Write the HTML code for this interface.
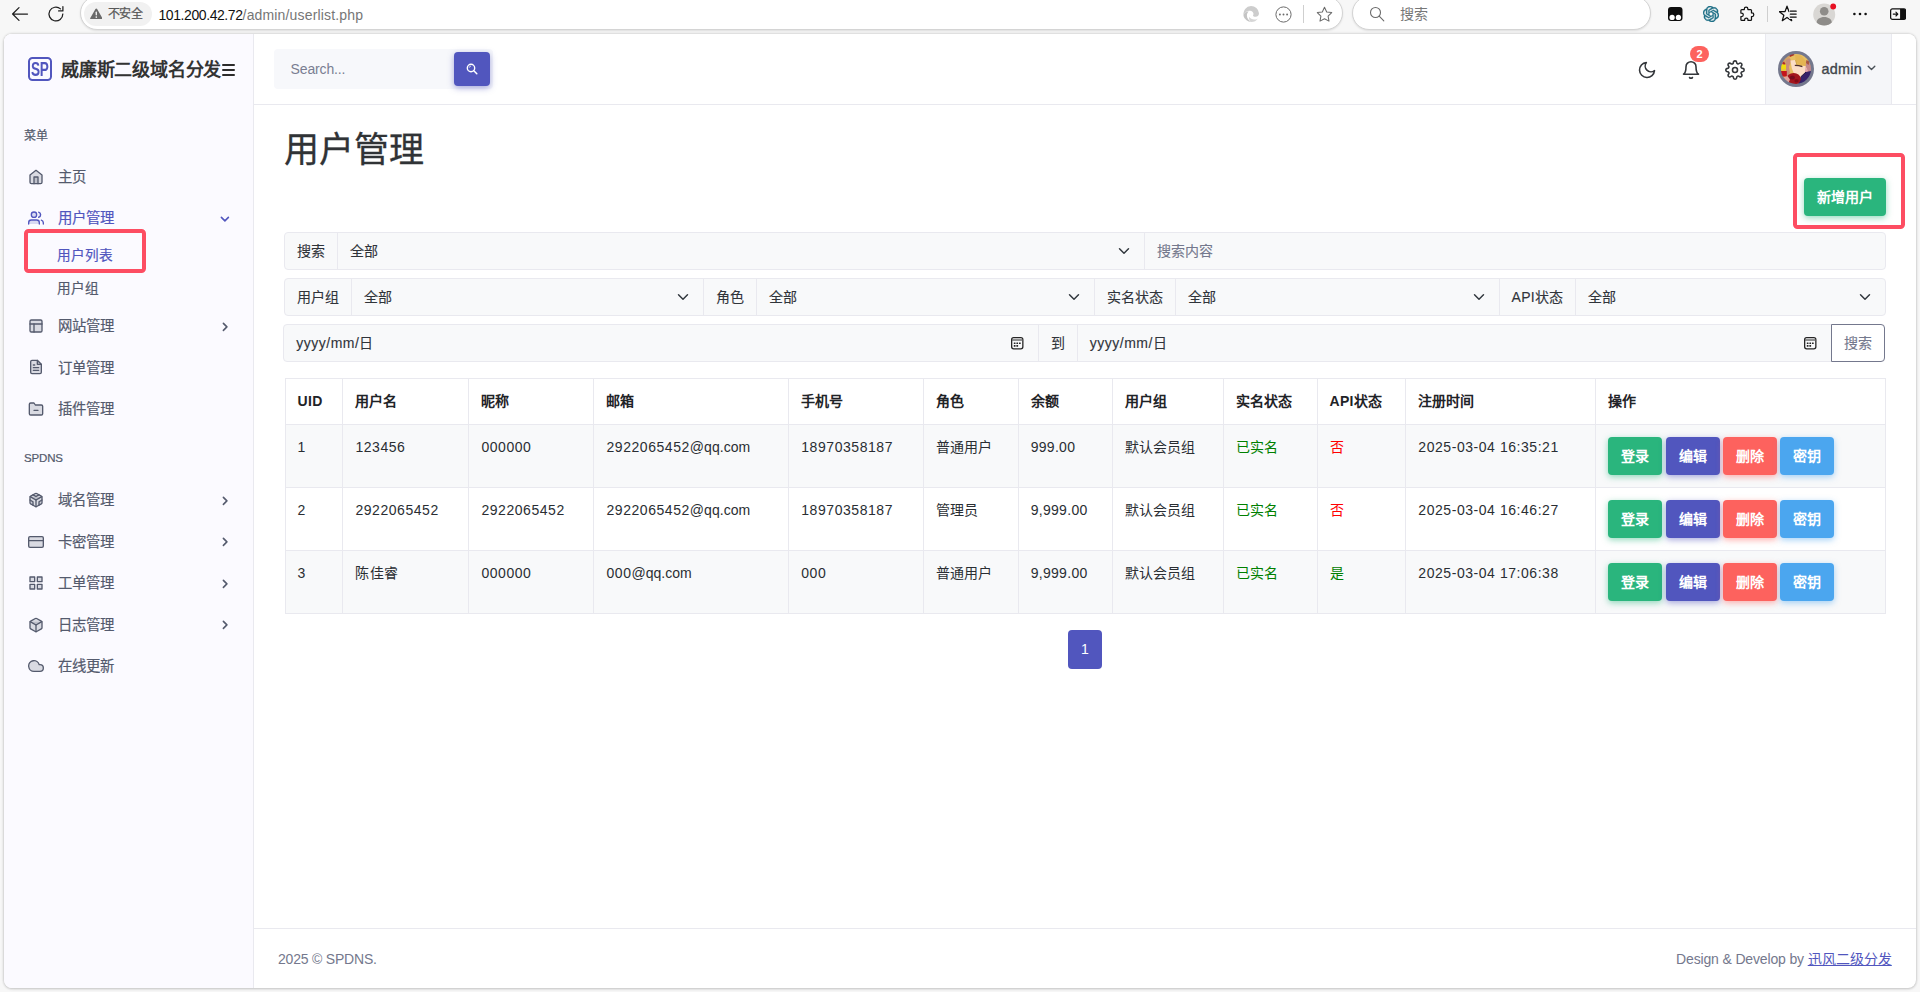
<!DOCTYPE html>
<html lang="zh-CN">
<head>
<meta charset="utf-8">
<title>用户管理</title>
<style>
*{box-sizing:border-box;margin:0;padding:0}
html,body{width:1920px;height:992px;overflow:hidden}
body{background:#f7f7f7;font-family:"Liberation Sans",sans-serif;font-size:14px;line-height:1.5;color:#495057;position:relative}
svg{display:block}
a{text-decoration:none;color:inherit}
/* ---------- browser chrome ---------- */
#chrome{position:absolute;left:0;top:0;width:1920px;height:34px;background:#f7f7f7}
#chrome .abs{position:absolute}
.pill{position:absolute;background:#fff;border:1px solid #d4d4d4;border-radius:17px;box-shadow:0 1px 2px rgba(0,0,0,.10)}
/* ---------- frame ---------- */
#frame{position:absolute;left:4px;top:33.600px;width:1912px;height:954.400px;background:#fff;border-radius:8px;overflow:hidden;box-shadow:0 0 3px rgba(0,0,0,.22),0 1px 3px rgba(0,0,0,.12)}
#topbar{position:absolute;left:0;top:0;width:1912px;height:71px;border-bottom:1px solid #e9e9ef;background:#fff}
#brand{position:absolute;left:0;top:0;width:250px;height:70px;background:#fbfaff;border-right:1px solid #e9e9ef}
#side{position:absolute;left:0;top:70px;width:250px;bottom:0;background:#fbfaff;border-right:1px solid #e9e9ef;padding-top:11.200px}
#main{position:absolute;left:250px;top:71px;right:0;bottom:60px}
#footer{position:absolute;left:250px;right:0;bottom:0;height:60px;border-top:1px solid #e9e9ef;color:#74788d;font-size:14px}

#brand .logo{position:absolute;left:24px;top:23.5px;width:24px;height:24px;border:2px solid #5156be;border-radius:4.500px;color:#5156be;font-weight:700;font-size:20px;line-height:20px;text-align:center;letter-spacing:-.5px}
#brand .logo span{display:inline-block;transform:scaleX(.68);transform-origin:50% 50%;margin:0 -10px}
#brand .txt{position:absolute;left:57px;top:23px;font-size:18px;font-weight:700;line-height:27px;color:#333;white-space:nowrap;letter-spacing:-.2px}
#brand .burger{position:absolute;left:217.500px;top:30px;width:13.500px;height:12px}
#brand .burger i{position:absolute;left:0;width:100%;height:2.200px;background:#2c2c2c;border-radius:1px}
#tsearch{position:absolute;left:269.600px;top:15.500px;width:219px;height:40px;border-radius:4px;background:#f7f8fb;color:#7a7e92;font-size:14px;line-height:40px;padding-left:17px;letter-spacing:-.15px}
#tsearch .b{position:absolute;right:3px;top:3px;width:36px;height:34px;border-radius:4px;background:#5156be;box-shadow:0 2px 6px 0 rgba(81,86,190,.5)}
.hicon{position:absolute}
#ublock{position:absolute;left:1760.700px;top:0;width:127.300px;height:70px;background:#f5f6f9;border-left:1px solid #e9e9ef;border-right:1px solid #e9e9ef}
#ublock .av{position:absolute;left:12.300px;top:17.400px;width:36px;height:36px;border-radius:50%;background:#74788d;padding:3px}
#ublock .nm{position:absolute;left:55.800px;top:24px;font-size:14.400px;line-height:22px;font-weight:400;color:#3f454b;letter-spacing:.25px;-webkit-text-stroke:.35px #3f454b}

#side .mt{height:42px;padding:12px 20px;font-size:12px;line-height:18px;color:#545a6d;font-weight:400;letter-spacing:.1px}
#side .it,#side .sub,#side .mt{-webkit-text-stroke:.2px currentColor}
#side .it{position:relative;height:41.440px;padding:9.920px 24px;font-size:14.400px;line-height:21.600px;color:#545a6d;white-space:nowrap}
#side .it svg.ic{position:absolute;left:24px;top:12px;width:16px;height:16px;fill:rgba(84,90,109,.2);stroke:#545a6d;stroke-width:2;stroke-linecap:round;stroke-linejoin:round}
#side .it span{position:absolute;left:54px;top:10.100px}
#side .it svg.ar{position:absolute;fill:none;stroke:#545a6d;stroke-width:1.600;stroke-linecap:round;stroke-linejoin:round}
#side .it.act{color:#5156be}
#side .it.act svg.ic{stroke:#5156be;fill:rgba(81,86,190,.2)}
#side .it.act svg.ar{stroke:#5156be}
#side .sub{height:33.200px;padding:6.400px 24px 6.400px 52.500px;font-size:13.600px;line-height:20.400px;color:#545a6d}
#side .sub.act{color:#5156be}
.redbox{position:absolute;border:4px solid #fd4d62;border-radius:4.500px}

/* main coords: x = target-254, y = target-104.6 */
#main h1{position:absolute;left:30px;top:24px;font-size:35px;line-height:42px;font-weight:400;color:#303336;white-space:nowrap;-webkit-text-stroke:.3px #303336}
.btn{position:absolute;height:38px;border-radius:4px;color:#fff;font-weight:700;font-size:14px;line-height:38px;text-align:center;white-space:nowrap}
.b-g{background:#2ab57d;box-shadow:0 2px 6px 0 rgba(42,181,125,.5)}
.b-p{background:#5156be;box-shadow:0 2px 6px 0 rgba(81,86,190,.5)}
.b-r{background:#fd625e;box-shadow:0 2px 6px 0 rgba(253,98,94,.5)}
.b-b{background:#4ba6ef;box-shadow:0 2px 6px 0 rgba(75,166,239,.5)}
.frow{position:absolute;height:38px;border:1px solid #e9e9ef;border-radius:4px;background:#f8f9fa;display:flex;font-size:14px;line-height:36px;color:#30343a;overflow:hidden;-webkit-text-stroke:.12px currentColor}
.frow>div{position:relative;border-right:1px solid #e9e9ef;padding:0 12px;white-space:nowrap;flex:none}
.frow>div:last-child{border-right:0}
.frow .sel svg{position:absolute;right:12px;top:12px}
.frow .ph{color:#74788d}
.frow .dt svg{position:absolute;right:14.300px;top:11.300px}
#tbl{position:absolute;left:30.500px;top:273.700px;border-collapse:collapse;table-layout:fixed;font-size:14px;color:#2a2e33}
#tbl th,#tbl td{border:1px solid #e9e9ef;padding:12px 12px;text-align:left;vertical-align:top;line-height:21px;white-space:nowrap;overflow:hidden;position:relative}
#tbl th{font-weight:700;height:46px;color:#1f2327}
#tbl td{height:63px}
#tbl tr.s td{background:#f8f9fa}
#tbl .num{letter-spacing:.55px}
</style>
</head>
<body>
<div id="chrome">
  <!-- back -->
  <svg class="abs" style="left:11px;top:5.600px" width="18" height="16" viewBox="0 0 18 16" fill="none" stroke="#1f1f1f" stroke-width="1.25" stroke-linecap="round" stroke-linejoin="round"><path d="M16.5 8H1.8M8 1.6 1.6 8 8 14.4"/></svg>
  <!-- reload -->
  <svg class="abs" style="left:47px;top:5px" width="18" height="18" viewBox="0 0 18 18" fill="none" stroke="#1f1f1f" stroke-width="1.25" stroke-linecap="round" stroke-linejoin="round"><path d="M15.8 9a6.9 6.9 0 1 1-2.3-5.1"/><path d="M15.9 1.6v4.3h-4.3"/></svg>
  <!-- address pill -->
  <div class="pill" style="left:80px;top:-4px;width:1263px;height:34px"></div>
  <div class="abs" style="left:84px;top:2px;width:68px;height:24px;border-radius:12px;background:#f1f1f1"></div>
  <svg class="abs" style="left:89.800px;top:7.800px" width="12.600" height="11.600" viewBox="0 0 12 11"><path d="M6 .4a.9.9 0 0 1 .8.5l4.9 8.6a.9.9 0 0 1-.8 1.3H1.100a.9.9 0 0 1-.8-1.3L5.200.9A.9.9 0 0 1 6 .4z" fill="#6a6a6a"/><rect x="5.35" y="3.4" width="1.3" height="3.7" rx=".6" fill="#f1f1f1"/><circle cx="6" cy="8.6" r=".8" fill="#f1f1f1"/></svg>
  <div class="abs" style="left:107.5px;top:5px;font-size:12px;line-height:18px;color:#585858;letter-spacing:-.1px;-webkit-text-stroke:.25px #585858">不安全</div>
  <div class="abs" id="url" style="left:158.500px;top:4.700px;font-size:14px;line-height:20px;color:#767676;white-space:nowrap"><span style="color:#111;letter-spacing:-.42px">101.200.42.72</span><span style="letter-spacing:.16px">/admin/userlist.php</span></div>
  <!-- pill right icons -->
  <svg class="abs" style="left:1243px;top:6px" width="16" height="16" viewBox="0 0 16 16"><path d="M8 0a8 8 0 0 1 8 7.2c0 2.300-1.600 3.600-3.400 3.600-1.500 0-2.600-.6-2.600-1.400 0-.5.500-.7.500-1.500C10.500 6.100 8.900 4.700 7 4.700 3.800 4.700 1.300 7 .5 9.300A8 8 0 0 1 8 0z" fill="#cdcdcd"/><path d="M.4 9.700C.8 7.500 3 5.500 5.800 5.500c-1.300.9-1.900 2.400-1.900 3.900 0 3 2.200 5.500 5 6.400A8 8 0 0 1 .4 9.700z" fill="#c4c4c4"/><path d="M6.400 10.800c.8 1.700 2.700 2.800 4.800 2.800 1.400 0 2.600-.4 3.600-1.200-1.300 2.200-3.800 3.600-6.500 3.600-2-1.200-2.700-3.400-1.900-5.200z" fill="#d6d6d6"/></svg>
  <svg class="abs" style="left:1274.500px;top:5.500px" width="17" height="17" viewBox="0 0 17 17"><circle cx="8.500" cy="8.500" r="7.600" fill="none" stroke="#6b6b6b" stroke-width="1"/><circle cx="4.900" cy="8.500" r=".95" fill="#6b6b6b"/><circle cx="8.500" cy="8.500" r=".95" fill="#6b6b6b"/><circle cx="12.100" cy="8.500" r=".95" fill="#6b6b6b"/></svg>
  <div class="abs" style="left:1303px;top:5px;width:1px;height:18px;background:#cfcfcf"></div>
  <svg class="abs" style="left:1315.500px;top:5.500px" width="17" height="17" viewBox="0 0 17 17" fill="none" stroke="#6b6b6b" stroke-width="1.050" stroke-linejoin="round"><path d="M8.500 1.300l2.200 4.600 5 .7-3.600 3.500.9 5-4.500-2.400L4 15.100l.9-5L1.300 6.600l5-.7z"/></svg>
  <!-- search pill -->
  <div class="pill" style="left:1351.500px;top:-4px;width:299px;height:34px"></div>
  <svg class="abs" style="left:1369px;top:5.500px" width="16" height="16" viewBox="0 0 16 16" fill="none" stroke="#6b6b6b" stroke-width="1.100" stroke-linecap="round"><circle cx="6.500" cy="6.500" r="5"/><path d="M10.200 10.200l4.600 4.600"/></svg>
  <div class="abs" style="left:1399.500px;top:3.500px;font-size:14px;line-height:20px;color:#777">搜索</div>
  <!-- extension icons -->
  <svg class="abs" style="left:1667.800px;top:7px" width="15" height="14" viewBox="0 0 15 14"><rect x="0" y="0" width="14.500" height="14" rx="3" fill="#0d0d0d"/><circle cx="4.100" cy="10.400" r="2.650" fill="#fff"/><circle cx="10.400" cy="10.400" r="2.650" fill="#fff"/></svg>
  <svg class="abs" style="left:1703px;top:6px" width="16" height="16" viewBox="0 0 24 24" fill="#1d6f86" stroke="#1d6f86" stroke-width=".7" stroke-linejoin="round"><path d="M22.282 9.821a5.985 5.985 0 0 0-.516-4.910 6.046 6.046 0 0 0-6.510-2.900A6.065 6.065 0 0 0 4.981 4.180a5.985 5.985 0 0 0-3.998 2.900 6.046 6.046 0 0 0 .743 7.097 5.980 5.980 0 0 0 .510 4.911 6.051 6.051 0 0 0 6.515 2.900A5.985 5.985 0 0 0 13.260 24a6.056 6.056 0 0 0 5.772-4.206 5.990 5.990 0 0 0 3.997-2.900 6.056 6.056 0 0 0-.747-7.073zM13.260 22.430a4.476 4.476 0 0 1-2.876-1.040l.141-.081 4.779-2.758a.795.795 0 0 0 .392-.681v-6.737l2.020 1.168a.071.071 0 0 1 .038.052v5.583a4.504 4.504 0 0 1-4.494 4.494zM3.600 18.304a4.470 4.470 0 0 1-.535-3.014l.142.085 4.783 2.759a.771.771 0 0 0 .780 0l5.843-3.369v2.332a.080.080 0 0 1-.033.062L9.740 19.950a4.500 4.500 0 0 1-6.140-1.646zM2.340 7.896a4.485 4.485 0 0 1 2.366-1.973V11.600a.766.766 0 0 0 .388.676l5.815 3.355-2.020 1.168a.076.076 0 0 1-.071 0l-4.830-2.786A4.504 4.504 0 0 1 2.340 7.872zm16.597 3.855l-5.833-3.387L15.119 7.200a.076.076 0 0 1 .071 0l4.830 2.791a4.494 4.494 0 0 1-.676 8.105v-5.678a.790.790 0 0 0-.407-.667zm2.010-3.023l-.141-.085-4.774-2.782a.776.776 0 0 0-.785 0L9.409 9.230V6.897a.066.066 0 0 1 .028-.061l4.830-2.787a4.500 4.500 0 0 1 6.680 4.660zm-12.640 4.135l-2.020-1.164a.080.080 0 0 1-.038-.057V6.075a4.500 4.500 0 0 1 7.375-3.453l-.142.080L8.704 5.460a.795.795 0 0 0-.393.681zm1.097-2.365l2.602-1.500 2.607 1.500v2.999l-2.597 1.500-2.607-1.500z"/></svg>
  <svg class="abs" style="left:1737.600px;top:5.500px" width="17" height="17" viewBox="0 0 17 17" fill="none" stroke="#111" stroke-width="1.250" stroke-linejoin="round"><path d="M6.300 3.600V3a1.800 1.800 0 0 1 3.600 0v.6h2.700a.9.900 0 0 1 .9.900v2.400h.5a1.800 1.800 0 0 1 0 3.600h-.5v3a.9.900 0 0 1-.9.900H10v-.7a1.700 1.700 0 0 0-3.400 0v.7H3.800a.9.900 0 0 1-.9-.9v-2.900h.6a1.800 1.800 0 0 0 0-3.600h-.6V4.500a.9.900 0 0 1 .9-.9z"/></svg>
  <div class="abs" style="left:1767px;top:6px;width:1px;height:16px;background:#cfcfcf"></div>
  <svg class="abs" style="left:1779px;top:5px" width="19" height="18" viewBox="0 0 19 18" fill="none" stroke="#111" stroke-width="1.250" stroke-linejoin="round" stroke-linecap="round"><path d="M8.00 1.20 L9.94 6.53 L15.61 6.73 L11.14 10.22 L12.70 15.67 L8.00 12.50 L3.30 15.67 L4.86 10.22 L0.39 6.73 L6.06 6.53Z"/><rect x="10.200" y="4.500" width="9" height="9.500" fill="#f7f7f7" stroke="none"/><path d="M11.300 6.200h5.900M11.300 9.100h5.900M11.300 12h5.900"/></svg>
  <svg class="abs" style="left:1812.700px;top:2.600px" width="24" height="24" viewBox="0 0 24 24"><defs><clipPath id="avc"><circle cx="11.200" cy="11.500" r="11"/></clipPath></defs><circle cx="11.200" cy="11.500" r="11" fill="#d9d7d4"/><g clip-path="url(#avc)" fill="#8e8c89"><circle cx="11.200" cy="8.300" r="4.300"/><path d="M3.600 19.500c0-3.400 3.400-5.600 7.600-5.600s7.600 2.200 7.600 5.600v4H3.600z"/></g><circle cx="20.200" cy="3.500" r="2.900" fill="#e81123"/></svg>
  <svg class="abs" style="left:1852px;top:12px" width="16" height="4" viewBox="0 0 16 4" fill="#111"><circle cx="2.400" cy="2" r="1.300"/><circle cx="8" cy="2" r="1.300"/><circle cx="13.600" cy="2" r="1.300"/></svg>
  <svg class="abs" style="left:1889.800px;top:8px" width="16.200" height="12.200" viewBox="0 0 18 13"><rect x=".7" y=".7" width="16.600" height="11.600" rx="2" fill="none" stroke="#111" stroke-width="1.400"/><path d="M11.200.7h4.100a2 2 0 0 1 2 2v7.600a2 2 0 0 1-2 2h-4.100z" fill="#111"/><path d="M3.600 6.500h4.700M6.600 4.400l2.100 2.100-2.100 2.100" fill="none" stroke="#111" stroke-width="1.300" stroke-linecap="round" stroke-linejoin="round"/></svg>
</div>
<div id="frame">
  <div id="topbar"><div id="brand">
    <div class="logo"><span>SP</span></div>
    <div class="txt">威廉斯二级域名分发</div>
    <div class="burger"><i style="top:0"></i><i style="top:5px"></i><i style="top:10px"></i></div>
  </div>
  <div id="tsearch">Search...<div class="b"><svg style="position:absolute;left:12px;top:11px" width="12" height="12" viewBox="0 0 12 12"><circle cx="5" cy="5" r="3.700" fill="none" stroke="#fff" stroke-width="1.400"/><path d="M7.800 7.800l3 3" stroke="#fff" stroke-width="1.500" stroke-linecap="round"/><path d="M3.200 4.600a2 2 0 0 1 1.600-1.500" stroke="#fff" stroke-width=".9" fill="none"/></svg></div></div>
  <!-- moon -->
  <svg class="hicon" style="left:1633.300px;top:26.700px" width="20" height="20" viewBox="0 0 24 24" fill="none" stroke="#33363a" stroke-width="1.900" stroke-linecap="round" stroke-linejoin="round"><path d="M21 12.790A9 9 0 1 1 11.210 3 7 7 0 0 0 21 12.790z"/></svg>
  <!-- bell -->
  <svg class="hicon" style="left:1677px;top:26.400px" width="20" height="20" viewBox="0 0 24 24" fill="none" stroke="#33363a" stroke-width="1.900" stroke-linecap="round" stroke-linejoin="round"><path d="M18 8A6 6 0 0 0 6 8c0 7-3 9-3 9h18s-3-2-3-9"/><path d="M13.730 21a2 2 0 0 1-3.460 0"/></svg>
  <div class="hicon" style="left:1686px;top:12.500px;width:19px;height:16px;border-radius:8px;background:#fd625e;color:#fff;font-size:11px;font-weight:700;line-height:16px;text-align:center">2</div>
  <!-- gear -->
  <svg class="hicon" style="left:1721px;top:26.400px" width="20" height="20" viewBox="0 0 24 24" fill="none" stroke="#33363a" stroke-width="1.900" stroke-linecap="round" stroke-linejoin="round"><circle cx="12" cy="12" r="3"/><path d="M19.400 15a1.650 1.650 0 0 0 .33 1.820l.06.06a2 2 0 0 1 0 2.830 2 2 0 0 1-2.830 0l-.06-.06a1.650 1.650 0 0 0-1.820-.33 1.650 1.650 0 0 0-1 1.510V21a2 2 0 0 1-2 2 2 2 0 0 1-2-2v-.09A1.650 1.650 0 0 0 9 19.400a1.650 1.650 0 0 0-1.820.33l-.06.06a2 2 0 0 1-2.830 0 2 2 0 0 1 0-2.830l.06-.06a1.650 1.650 0 0 0 .33-1.820 1.650 1.650 0 0 0-1.510-1H3a2 2 0 0 1-2-2 2 2 0 0 1 2-2h.09A1.650 1.650 0 0 0 4.600 9a1.650 1.650 0 0 0-.33-1.820l-.06-.06a2 2 0 0 1 0-2.830 2 2 0 0 1 2.830 0l.06.06a1.650 1.650 0 0 0 1.820.33H9a1.650 1.650 0 0 0 1-1.510V3a2 2 0 0 1 2-2 2 2 0 0 1 2 2v.09a1.650 1.650 0 0 0 1 1.510 1.650 1.650 0 0 0 1.820-.33l.06-.06a2 2 0 0 1 2.830 0 2 2 0 0 1 0 2.830l-.06.06a1.650 1.650 0 0 0-.33 1.820V9a1.650 1.650 0 0 0 1.510 1H21a2 2 0 0 1 2 2 2 2 0 0 1-2 2h-.09a1.650 1.650 0 0 0-1.510 1z"/></svg>
  <div id="ublock">
    <div class="av"><svg width="30" height="30" viewBox="0 0 30 30" style="border-radius:50%"><defs><filter id="avb" x="-10%" y="-10%" width="120%" height="120%"><feGaussianBlur stdDeviation=".45"/></filter></defs><g filter="url(#avb)"><rect x="-2" y="-2" width="34" height="34" fill="#e7bf62"/>
<path d="M-1 9l7-7 4-1-3 5-1 6-2 9-6 2z" fill="#d3a064"/><path d="M5 6l4-2 1 3-2 6 1 6-3 4-2-4 1-7z" fill="#c98f7a"/>
<path d="M8 .5l4-1.500 1.500 2-4.500 2z" fill="#a8322c"/><path d="M1 9l2-1.500 1.500 2.500-1 2z" fill="#b32a2a"/>
<rect x="-1" y="10.500" width="6" height="6" fill="#f0dc0a"/><path d="M0 14.500l5 .5v2H0z" fill="#e9c63a"/>
<path d="M25 6.500l4.500 2.500 1 8.500-4 3.200-.2-4.400-2-4.600z" fill="#c58a8c"/><path d="M25.500 6l3 1.500-1 3.500-2.500-2z" fill="#a8553f"/>
<path d="M9.400 6.400l5-.4.900 5.200 9 .5 2 4.600-3.600 5-3.200 2.100-2.300-3-4.400-1.200-2-5z" fill="#fbddc5"/>
<path d="M14 1l6 .5 5 6-.5 4.500-4.500-.8-3-1.200-2.200-3.500z" fill="#e4b552"/><path d="M14.500 6l1.500 5 5 .8" stroke="#caa045" stroke-width=".8" fill="none"/>
<path d="M13.800 11.300l4 .3 3.600 1" stroke="#4e2f2f" stroke-width="1.200" fill="none"/>
<path d="M24.500 12.500l2.300 4-1 4.500-2.300 1.500z" fill="#e3a7ae"/>
<rect x="-1" y="17" width="6.800" height="5.600" fill="#c5121f"/>
<path d="M19.600 23l5.400-5 6-1.200v9.700l-8.500 5h-6z" fill="#34206b"/><path d="M19.600 23l5.400-5" stroke="#1c1238" stroke-width=".9"/>
<ellipse cx="12.600" cy="25" rx="7.200" ry="5.900" fill="#a2121c"/><ellipse cx="11.300" cy="23.600" rx="2.600" ry="1.900" fill="#76101a"/><ellipse cx="15.500" cy="26.800" rx="2" ry="1.500" fill="#7f0f18"/>
<path d="M2.500 23.500l4-1.500 2.500 3.500-2 4.500H4z" fill="#e2a29a"/></g></svg></div>
    <div class="nm">admin</div>
    <svg style="position:absolute;left:101.800px;top:31px" width="9" height="6" viewBox="0 0 9 6" fill="none" stroke="#495057" stroke-width="1.400" stroke-linecap="round" stroke-linejoin="round"><path d="M1.200 1.300l3.300 3.200 3.300-3.200"/></svg>
  </div>
</div>
  <div id="side"><div class="mt">菜单</div>
<div class="it"><svg class="ic" viewBox="0 0 24 24"><path d="M3 9l9-7 9 7v11a2 2 0 0 1-2 2H5a2 2 0 0 1-2-2z"/><polyline points="9 22 9 12 15 12 15 22"/></svg><span>主页</span></div>
<div class="it act"><svg class="ic" viewBox="0 0 24 24"><path d="M17 21v-2a4 4 0 0 0-4-4H5a4 4 0 0 0-4 4v2"/><circle cx="9" cy="7" r="4"/><path d="M23 21v-2a4 4 0 0 0-3-3.870"/><path d="M16 3.130a4 4 0 0 1 0 7.750"/></svg><span>用户管理</span><svg class="ar" style="left:216px;top:17.400px" width="10" height="7" viewBox="0 0 10 7"><path d="M1.400 1.400l3.500 3.500 3.500-3.500"/></svg></div>
<div class="sub act">用户列表</div>
<div class="sub">用户组</div>
<div class="it"><svg class="ic" viewBox="0 0 24 24"><rect x="3" y="3" width="18" height="18" rx="2" ry="2"/><line x1="3" y1="9" x2="21" y2="9"/><line x1="9" y1="21" x2="9" y2="9"/></svg><span>网站管理</span><svg class="ar" style="left:218px;top:15.600px" width="7" height="10" viewBox="0 0 7 10"><path d="M1.400 1.400l3.500 3.500-3.500 3.500"/></svg></div>
<div class="it"><svg class="ic" viewBox="0 0 24 24"><path d="M14 2H6a2 2 0 0 0-2 2v16a2 2 0 0 0 2 2h12a2 2 0 0 0 2-2V8z"/><polyline points="14 2 14 8 20 8"/><line x1="16" y1="13" x2="8" y2="13"/><line x1="16" y1="17" x2="8" y2="17"/><polyline points="10 9 9 9 8 9"/></svg><span>订单管理</span></div>
<div class="it"><svg class="ic" viewBox="0 0 24 24"><path d="M22 19a2 2 0 0 1-2 2H4a2 2 0 0 1-2-2V5a2 2 0 0 1 2-2h5l2 3h9a2 2 0 0 1 2 2z"/><line x1="9" y1="14" x2="15" y2="14"/></svg><span>插件管理</span></div>
<div class="mt" style="margin-top:8px;padding-top:11px;padding-bottom:13px;font-size:11.500px;letter-spacing:-.15px">SPDNS</div>
<div class="it"><svg class="ic" viewBox="0 0 24 24"><path d="M21 16V8a2 2 0 0 0-1-1.730l-7-4a2 2 0 0 0-2 0l-7 4A2 2 0 0 0 3 8v8a2 2 0 0 0 1 1.730l7 4a2 2 0 0 0 2 0l7-4A2 2 0 0 0 21 16z"/><polyline points="7.5 4.21 12 6.81 16.5 4.21"/><polyline points="7.5 19.79 7.5 14.6 3 12"/><polyline points="21 12 16.5 14.6 16.5 19.79"/><polyline points="3.27 6.96 12 12.01 20.73 6.96"/><line x1="12" y1="22.080" x2="12" y2="12"/></svg><span>域名管理</span><svg class="ar" style="left:218px;top:15.600px" width="7" height="10" viewBox="0 0 7 10"><path d="M1.400 1.400l3.500 3.500-3.500 3.500"/></svg></div>
<div class="it"><svg class="ic" viewBox="0 0 24 24"><rect x="1" y="4" width="22" height="16" rx="2" ry="2"/><line x1="1" y1="10" x2="23" y2="10"/></svg><span>卡密管理</span><svg class="ar" style="left:218px;top:15.600px" width="7" height="10" viewBox="0 0 7 10"><path d="M1.400 1.400l3.500 3.500-3.500 3.500"/></svg></div>
<div class="it"><svg class="ic" viewBox="0 0 24 24"><rect x="3" y="3" width="7" height="7"/><rect x="14" y="3" width="7" height="7"/><rect x="14" y="14" width="7" height="7"/><rect x="3" y="14" width="7" height="7"/></svg><span>工单管理</span><svg class="ar" style="left:218px;top:15.600px" width="7" height="10" viewBox="0 0 7 10"><path d="M1.400 1.400l3.500 3.500-3.500 3.500"/></svg></div>
<div class="it"><svg class="ic" viewBox="0 0 24 24"><path d="M21 16V8a2 2 0 0 0-1-1.730l-7-4a2 2 0 0 0-2 0l-7 4A2 2 0 0 0 3 8v8a2 2 0 0 0 1 1.730l7 4a2 2 0 0 0 2 0l7-4A2 2 0 0 0 21 16z"/><polyline points="3.27 6.96 12 12.01 20.73 6.96"/><line x1="12" y1="22.080" x2="12" y2="12"/></svg><span>日志管理</span><svg class="ar" style="left:218px;top:15.600px" width="7" height="10" viewBox="0 0 7 10"><path d="M1.400 1.400l3.500 3.500-3.500 3.500"/></svg></div>
<div class="it"><svg class="ic" viewBox="0 0 24 24"><path d="M18 10h-1.260A8 8 0 1 0 9 20h9a5 5 0 0 0 0-10z"/></svg><span>在线更新</span></div>
<div class="redbox" style="left:20.200px;top:125.800px;width:121.600px;height:43.500px"></div></div>
  <div id="main">
  <h1>用户管理</h1>
  <div class="btn b-g" style="left:1550px;top:73.500px;width:82px">新增用户</div>
  <div class="redbox" style="left:1539.200px;top:48.500px;width:111.800px;height:76px"></div>
  <div class="frow" style="left:30.400px;top:127.700px;width:1601.400px">
    <div style="width:52.600px">搜索</div>
    <div class="sel" style="width:806.7px">全部<svg width="16" height="12" viewBox="0 0 16 16" fill="none" stroke="#343a40" stroke-width="2" stroke-linecap="round" stroke-linejoin="round"><path d="M2 5l6 6 6-6"/></svg></div>
    <div class="ph" style="flex:1">搜索内容</div>
  </div>
  <div class="frow" style="left:30.400px;top:173.700px;width:1601.400px">
    <div style="width:66.300px">用户组</div>
    <div class="sel" style="width:352.0px">全部<svg width="16" height="12" viewBox="0 0 16 16" fill="none" stroke="#343a40" stroke-width="2" stroke-linecap="round" stroke-linejoin="round"><path d="M2 5l6 6 6-6"/></svg></div>
    <div style="width:53.3px">角色</div>
    <div class="sel" style="width:337.7px">全部<svg width="16" height="12" viewBox="0 0 16 16" fill="none" stroke="#343a40" stroke-width="2" stroke-linecap="round" stroke-linejoin="round"><path d="M2 5l6 6 6-6"/></svg></div>
    <div style="width:81.2px">实名状态</div>
    <div class="sel" style="width:323.7px">全部<svg width="16" height="12" viewBox="0 0 16 16" fill="none" stroke="#343a40" stroke-width="2" stroke-linecap="round" stroke-linejoin="round"><path d="M2 5l6 6 6-6"/></svg></div>
    <div style="width:76.2px"><span style="letter-spacing:.3px">API</span>状态</div>
    <div class="sel" style="flex:1">全部<svg width="16" height="12" viewBox="0 0 16 16" fill="none" stroke="#343a40" stroke-width="2" stroke-linecap="round" stroke-linejoin="round"><path d="M2 5l6 6 6-6"/></svg></div>
  </div>
  <div class="frow" style="left:29.300px;top:219.700px;width:1601.500px;overflow:visible">
    <div class="dt" style="width:754.600px"><span style="letter-spacing:.5px">yyyy/mm/</span>日<svg width="13" height="13" viewBox="0 0 13 13" fill="none" stroke="#262626" stroke-width="1.300"><rect x=".65" y=".65" width="11.200" height="11.200" rx="2"/><path d="M1 3h10.500" stroke="#6e6e6e" stroke-width="1.500"/><g fill="#262626" stroke="none"><rect x="2.800" y="5.500" width="1.700" height="1.600" rx=".3"/><rect x="5.400" y="5.500" width="1.700" height="1.600" rx=".3"/><rect x="8" y="5.500" width="1.700" height="1.600" rx=".3"/><rect x="2.800" y="8.100" width="1.700" height="1.600" rx=".3"/><rect x="5.400" y="8.100" width="1.700" height="1.600" rx=".3"/></g></svg></div>
    <div style="width:38.9px">到</div>
    <div class="dt" style="width:753.6px;border-right:0"><span style="letter-spacing:.5px">yyyy/mm/</span>日<svg width="13" height="13" viewBox="0 0 13 13" fill="none" stroke="#262626" stroke-width="1.300"><rect x=".65" y=".65" width="11.200" height="11.200" rx="2"/><path d="M1 3h10.500" stroke="#6e6e6e" stroke-width="1.500"/><g fill="#262626" stroke="none"><rect x="2.800" y="5.500" width="1.700" height="1.600" rx=".3"/><rect x="5.400" y="5.500" width="1.700" height="1.600" rx=".3"/><rect x="8" y="5.500" width="1.700" height="1.600" rx=".3"/><rect x="2.800" y="8.100" width="1.700" height="1.600" rx=".3"/><rect x="5.400" y="8.100" width="1.700" height="1.600" rx=".3"/></g></svg></div>
    <div style="flex:1;margin:-1px -1px -1px 0;border:1px solid #74788d;border-radius:0 4px 4px 0;background:#fff;color:#74788d;text-align:center;line-height:36px;padding:0">搜索</div>
  </div>
<table id="tbl"><colgroup><col style="width:57.9px"><col style="width:126.0px"><col style="width:125.1px"><col style="width:194.8px"><col style="width:135.0px"><col style="width:94.4px"><col style="width:94.7px"><col style="width:110.2px"><col style="width:94.0px"><col style="width:88.8px"><col style="width:190.1px"><col style="width:289.6px"></colgroup>
<tr><th><span style="letter-spacing:.4px">UID</span></th><th>用户名</th><th>昵称</th><th>邮箱</th><th>手机号</th><th>角色</th><th>余额</th><th>用户组</th><th>实名状态</th><th><span style="letter-spacing:.3px">API</span>状态</th><th>注册时间</th><th>操作</th></tr>
<tr class="s"><td class="num">1</td><td class="num">123456</td><td class="num">000000</td><td class="num">2922065452<span style="letter-spacing:.05px">@qq.com</span></td><td class="num">18970358187</td><td>普通用户</td><td class="num" style="letter-spacing:.3px">999.00</td><td>默认会员组</td><td style="color:#008000">已实名</td><td style="color:#ff0000">否</td><td class="num">2025-03-04 16:35:21</td><td><div class="btn b-g" style="left:11.900px;top:11.300px;width:54px">登录</div><div class="btn b-p" style="left:70px;top:11.300px;width:54px">编辑</div><div class="btn b-r" style="left:126.400px;top:11.300px;width:54px">删除</div><div class="btn b-b" style="left:183.500px;top:11.300px;width:54px">密钥</div></td></tr>
<tr class=""><td class="num">2</td><td class="num">2922065452</td><td class="num">2922065452</td><td class="num">2922065452<span style="letter-spacing:.05px">@qq.com</span></td><td class="num">18970358187</td><td>管理员</td><td class="num" style="letter-spacing:.3px">9,999.00</td><td>默认会员组</td><td style="color:#008000">已实名</td><td style="color:#ff0000">否</td><td class="num">2025-03-04 16:46:27</td><td><div class="btn b-g" style="left:11.900px;top:11.300px;width:54px">登录</div><div class="btn b-p" style="left:70px;top:11.300px;width:54px">编辑</div><div class="btn b-r" style="left:126.400px;top:11.300px;width:54px">删除</div><div class="btn b-b" style="left:183.500px;top:11.300px;width:54px">密钥</div></td></tr>
<tr class="s"><td class="num">3</td><td class="num">陈佳睿</td><td class="num">000000</td><td class="num">000<span style="letter-spacing:0">@qq.com</span></td><td class="num">000</td><td>普通用户</td><td class="num" style="letter-spacing:.3px">9,999.00</td><td>默认会员组</td><td style="color:#008000">已实名</td><td style="color:#008000">是</td><td class="num">2025-03-04 17:06:38</td><td><div class="btn b-g" style="left:11.900px;top:11.300px;width:54px">登录</div><div class="btn b-p" style="left:70px;top:11.300px;width:54px">编辑</div><div class="btn b-r" style="left:126.400px;top:11.300px;width:54px">删除</div><div class="btn b-b" style="left:183.500px;top:11.300px;width:54px">密钥</div></td></tr>
</table>
  <div class="btn b-p" style="left:814px;top:525.400px;width:34px;height:39px;line-height:39px;font-weight:400;box-shadow:none">1</div>
</div>
  <div id="footer"><div style="position:absolute;left:24px;top:20px;line-height:21px;letter-spacing:-.2px">2025 © SPDNS.</div><div style="position:absolute;right:24.300px;top:20px;line-height:21px;white-space:nowrap"><span style="letter-spacing:-.15px">Design &amp; Develop by </span><span style="color:#5156be;text-decoration:underline">迅风二级分发</span></div></div>
</div>
</body>
</html>
